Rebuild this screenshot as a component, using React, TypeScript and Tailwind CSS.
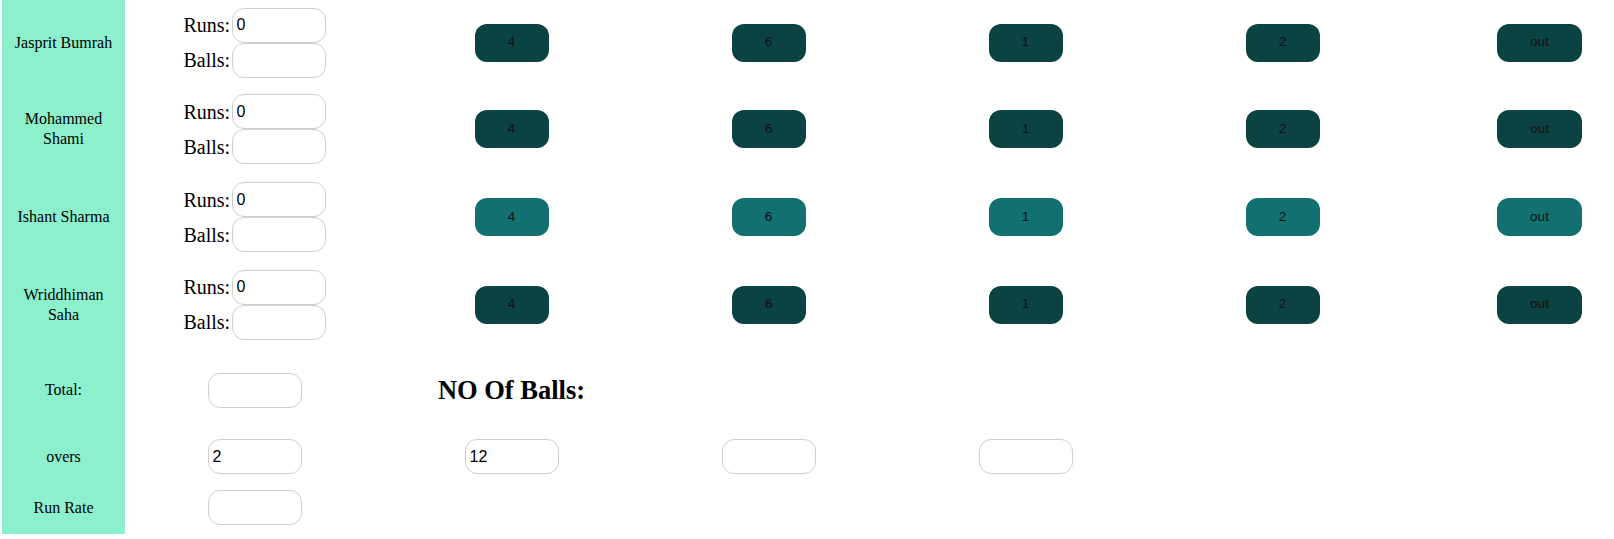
const players = ["Jasprit Bumrah", "Mohammed Shami", "Ishant Sharma", "Wriddhiman Saha"];
const shots = ["4", "6", "1", "2", "out"];
const rowHeights = ["h-[85px]", "h-[88px]", "h-[88px]", "h-[87px]"];

function Box({ value = "" }: { value?: string }) {
  return (
    <input
      defaultValue={value}
      className="w-[94px] h-[35px] rounded-[12px] border border-[#cfcfcf] bg-white pl-[4px] text-[16px] text-black outline-none font-['Liberation_Sans',Arial,sans-serif]"
    />
  );
}

function NameCell({ children, h }: { children: React.ReactNode; h: string }) {
  return (
    <div className={`${h} bg-[#8cf0cd] flex items-center justify-center px-2 text-center text-[16px] leading-[20px] text-black`}>
      {children}
    </div>
  );
}

export default function App() {
  return (
    <div className="w-[1614px] h-[539px] overflow-hidden bg-white font-['Liberation_Serif','Times_New_Roman',serif]">
      <div className="ml-[2px] grid grid-cols-[123px_repeat(6,255px)] gap-x-[2px]">
        {players.map((p, i) => (
          <div key={p} className="contents">
            <NameCell h={rowHeights[i]}>{p}</NameCell>
            <div className="flex flex-col items-center justify-center">
              <div className="flex items-center text-[20px]">
                <span className="w-[48px]">Runs:</span>
                <Box value="0" />
              </div>
              <div className="flex items-center text-[20px]">
                <span className="w-[48px]">Balls:</span>
                <Box />
              </div>
            </div>
            {shots.map((s) => (
              <div key={s} className="flex items-center justify-center">
                <button
                  className={`h-[38px] min-w-[74px] px-[33px] rounded-[12px] text-[13.5px] text-[#111] font-['Liberation_Sans',Arial,sans-serif] ${
                    i === 2 ? "bg-[#127070]" : "bg-[#0b4242]"
                  }`}
                >
                  {s}
                </button>
              </div>
            ))}
          </div>
        ))}

        <NameCell h="h-[84px]">Total:</NameCell>
        <div className="flex items-center justify-center">
          <Box />
        </div>
        <div className="flex items-center justify-center">
          <h2 className="text-[26.5px] font-bold leading-none">NO Of Balls:</h2>
        </div>
        <div className="col-span-4" />

        <NameCell h="h-[49px]">overs</NameCell>
        <div className="flex items-center justify-center">
          <Box value="2" />
        </div>
        <div className="flex items-center justify-center">
          <Box value="12" />
        </div>
        <div className="flex items-center justify-center">
          <Box />
        </div>
        <div className="flex items-center justify-center">
          <Box />
        </div>
        <div className="col-span-2" />

        <NameCell h="h-[53px]">Run Rate</NameCell>
        <div className="flex items-center justify-center">
          <Box />
        </div>
        <div className="col-span-5" />
      </div>
    </div>
  );
}
